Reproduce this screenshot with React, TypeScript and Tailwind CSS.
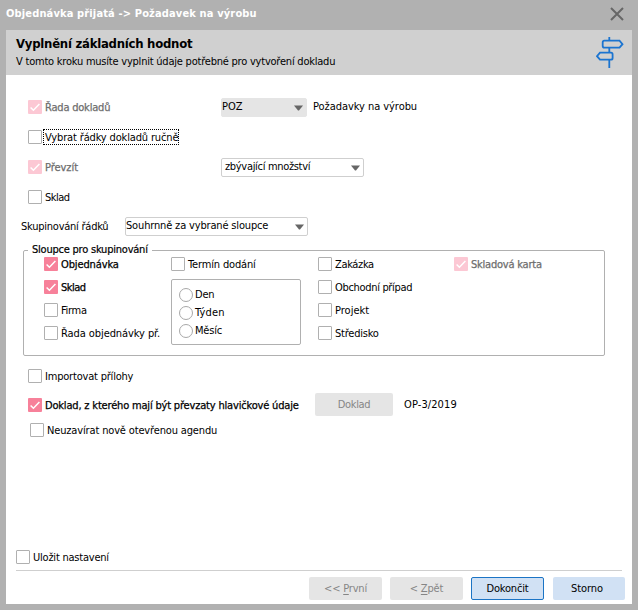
import type { ReactNode } from 'react';
import { clsx } from 'clsx';

interface CheckProps {
    label: string;
    checked?: boolean;
    disabled?: boolean;
    focused?: boolean;
    textClass?: string;
}

function Check({ label, checked, disabled, focused, textClass }: CheckProps) {
    return (
        <label className="flex h-3.5 items-center">
            <span
                className={clsx(
                    'h-3.5 w-3.5 shrink-0 rounded-[1px]',
                    !checked && 'border border-[#b0b0b0] bg-white',
                    checked && (disabled ? 'bg-[#fcc8d4]' : 'bg-[#f7819a]')
                )}
            >
                {checked && (
                    <svg viewBox="0 0 14 14" className="h-3.5 w-3.5" fill="none" stroke="white" strokeWidth="1.5">
                        <path d="M2.6 7.5 5.4 10.2 11.4 4" />
                    </svg>
                )}
            </span>
            <span
                className={clsx(
                    'ml-px border border-dotted pt-[2px] pl-px leading-[12px] whitespace-nowrap',
                    focused ? 'border-black' : 'border-transparent',
                    disabled && 'text-[#6d6d6d]',
                    checked && '[-webkit-text-stroke:0.25px]',
                    textClass
                )}
            >
                {label}
            </span>
        </label>
    );
}

function Select({ value, className, textClass }: { value: string; className: string; textClass?: string }) {
    return (
        <div className={clsx('flex h-[19px] items-center justify-between rounded-[2px] border pr-[3px]', className)}>
            <span className={clsx('-mt-px whitespace-nowrap', textClass)}>{value}</span>
            <svg viewBox="0 0 9 6" className="mt-px h-[6px] w-[9px]" fill="#666">
                <path d="M0 0.5H9L5 5.5H4Z" />
            </svg>
        </div>
    );
}

function Radio({ label, textClass }: { label: string; textClass?: string }) {
    return (
        <label className="flex h-[18px] items-center">
            <span className="-mt-px h-3.5 w-3.5 rounded-full border border-[#a8a8a8] bg-white" />
            <span className={clsx('ml-0.5', textClass)}>{label}</span>
        </label>
    );
}

function Button({ children, className }: { children: ReactNode; className: string }) {
    return (
        <button type="button" className={clsx('flex h-[23px] items-center justify-center rounded-[2px]', className)}>
            {children}
        </button>
    );
}

export default function App() {
    return (
        <div className="flex h-[610px] w-[638px] flex-col bg-[#b1b1b1] px-1.5 pb-1.5 font-['DejaVu_Sans_Condensed','DejaVu_Sans',sans-serif] text-[11px] leading-[14px] text-black [font-stretch:condensed]">
            {/* Title bar */}
            <div className="flex h-[30px] items-center justify-between pr-2 pb-[3px] text-white">
                <span className="font-bold tracking-[0.14px]">Objednávka přijatá -&gt; Požadavek na výrobu</span>
                <svg viewBox="0 0 14 14" className="h-3.5 w-3.5" fill="none" stroke="#666" strokeWidth="2">
                    <path d="M1 1 13 13M13 1 1 13" />
                </svg>
            </div>

            <div className="flex w-[626px] flex-1 flex-col bg-white">
                {/* Step header */}
                <div className="flex h-[45px] justify-between bg-[#d0d0d0] pt-[5px] pr-2 pl-2.5">
                    <div>
                        <h1 className="text-[13px] leading-[17px] font-bold tracking-[-0.25px]">Vyplnění základních hodnot</h1>
                        <p className="mt-[3px] tracking-[-0.22px]">V tomto kroku musíte vyplnit údaje potřebné pro vytvoření dokladu</p>
                    </div>
                    <svg viewBox="0 0 28 32" className="mt-0.5 h-8 w-7" fill="none" stroke="#1b74d0" strokeWidth="1.8">
                        <path d="M13.3 0V3.5M13.3 11V16M13.3 23V31" />
                        <path d="M8.3 3.7H23.5L26.5 7.2 23.5 10.7H8.3Q6.7 10.7 6.7 9V5.4Q6.7 3.7 8.3 3.7Z" />
                        <path d="M15 15.7H4L1 19.2 4 22.7H15Q16.6 22.7 16.6 21V17.4Q16.6 15.7 15 15.7Z" />
                    </svg>
                </div>

                {/* Document options */}
                <div className="mt-[17px] grid auto-rows-[30px] grid-cols-[193px_1fr] items-center pl-[22px]">
                    <Check label="Řada dokladů" checked disabled textClass="tracking-[-0.2px]" />
                    <div className="flex items-center gap-1.5">
                        <Select value="POZ" className="w-[86px] border-[#e5e5e5] bg-[#e5e5e5]" />
                        <span className="tracking-[-0.05px]">Požadavky na výrobu</span>
                    </div>
                    <div className="col-span-2">
                        <Check label="Vybrat řádky dokladů ručně" focused textClass="tracking-[-0.15px]" />
                    </div>
                    <Check label="Převzít" checked disabled textClass="tracking-[-0.05px]" />
                    <Select value="zbývající množství" className="w-[143px] border-[#cfcfcf] pl-[3px]" textClass="tracking-[-0.32px]" />
                    <div className="col-span-2">
                        <Check label="Sklad" textClass="tracking-[-0.5px]" />
                    </div>
                </div>

                <div className="mt-[5px] flex h-[19px] items-center pl-[15px]">
                    <span className="w-[104px] tracking-[-0.24px]">Skupinování řádků</span>
                    <Select
                        value="Souhrnně za vybrané sloupce"
                        className="w-[183px] border-[#cfcfcf]"
                        textClass="tracking-[-0.16px]"
                    />
                </div>

                {/* Grouping columns */}
                <fieldset className="mt-[7px] ml-[17px] h-[113px] w-[582px] rounded-[2px] border border-[#b0b0b0]">
                    <legend className="ml-1 h-3.5 px-1 tracking-[-0.22px] whitespace-nowrap [-webkit-text-stroke:0.2px]">
                        Sloupce pro skupinování
                    </legend>
                    <div className="flex pl-5">
                        <div className="flex w-[127px] flex-col gap-[9px]">
                            <Check label="Objednávka" checked textClass="tracking-[-0.12px]" />
                            <Check label="Sklad" checked textClass="tracking-[-0.5px]" />
                            <Check label="Firma" textClass="tracking-[-0.3px]" />
                            <Check label="Řada objednávky př." textClass="tracking-[-0.08px]" />
                        </div>
                        <div className="w-[147px]">
                            <Check label="Termín dodání" textClass="tracking-[-0.15px]" />
                            <div className="mt-2 h-[66px] w-[130px] rounded-[2px] border border-[#b0b0b0] pt-1.5 pl-[7px]">
                                <Radio label="Den" textClass="tracking-[-0.2px]" />
                                <Radio label="Týden" textClass="tracking-[0.15px]" />
                                <Radio label="Měsíc" textClass="tracking-[-0.2px]" />
                            </div>
                        </div>
                        <div className="flex w-[136px] flex-col gap-[9px]">
                            <Check label="Zakázka" textClass="tracking-[-0.35px]" />
                            <Check label="Obchodní případ" textClass="tracking-[-0.32px]" />
                            <Check label="Projekt" />
                            <Check label="Středisko" textClass="tracking-[-0.22px]" />
                        </div>
                        <Check label="Skladová karta" checked disabled textClass="tracking-[-0.22px]" />
                    </div>
                </fieldset>

                <div className="mt-[13px] pl-[22px]">
                    <Check label="Importovat přílohy" textClass="tracking-[-0.2px]" />
                    <div className="mt-2.5 flex h-[23px] items-center">
                        <div className="w-[287px]">
                            <Check
                                label="Doklad, z kterého mají být převzaty hlavičkové údaje"
                                checked
                                textClass="tracking-[-0.18px]"
                            />
                        </div>
                        <Button className="w-[78px] bg-[#e5e5e5] tracking-[-0.3px] text-[#858585]">Doklad</Button>
                        <span className="ml-[11px] tracking-[0.1px]">OP-3/2019</span>
                    </div>
                    <div className="mt-[7px] ml-0.5">
                        <Check label="Neuzavírat nově otevřenou agendu" textClass="tracking-[-0.15px]" />
                    </div>
                </div>

                {/* Footer */}
                <div className="mt-auto pb-1">
                    <div className="mx-2.5 border-b border-[#cfcfcf] pb-1.5">
                        <Check label="Uložit nastavení" textClass="tracking-[-0.22px]" />
                    </div>
                    <div className="mt-1.5 flex gap-2 pl-[303px]">
                        <Button className="w-[73px] bg-[#e5e5e5] tracking-[-0.2px] text-[#858585]">
                            <span>&lt;&lt; <u className="underline-offset-2">P</u>rvní</span>
                        </Button>
                        <Button className="w-[73px] bg-[#e5e5e5] tracking-[-0.15px] text-[#858585]">
                            <span>&lt; <u className="underline-offset-2">Z</u>pět</span>
                        </Button>
                        <Button className="w-[73px] border border-[#1b74c5] bg-[#d1e1f4] tracking-[-0.2px]">Dokončit</Button>
                        <Button className="ml-px w-[72px] bg-[#d1e1f4] pr-1 tracking-[-0.1px]">Storno</Button>
                    </div>
                </div>
            </div>
        </div>
    );
}
